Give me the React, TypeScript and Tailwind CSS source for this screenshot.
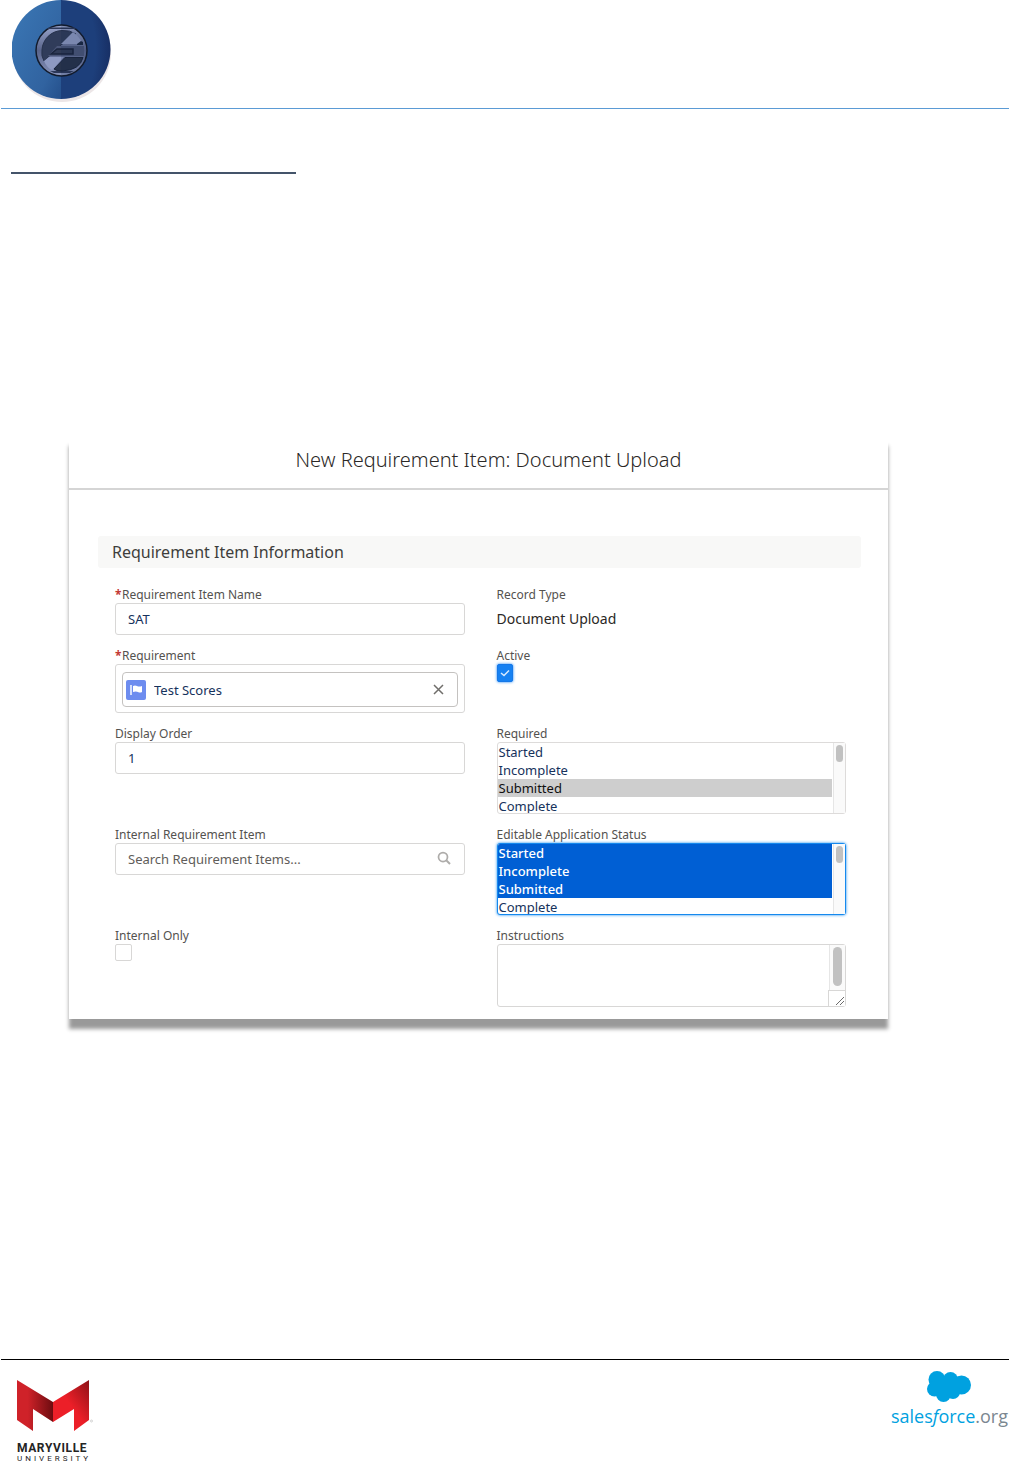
import React, { ReactNode, useState } from "react";
import clsx from "clsx";

const statuses = ["Started", "Incomplete", "Submitted", "Complete"];

interface FieldProps {
  id: string;
  label: string;
  required?: boolean;
  children: ReactNode;
}

function Field({ id, label, required, children }: FieldProps) {
  return (
    <div className="flex flex-col items-start">
      <label
        htmlFor={id}
        className="flex h-[18px] text-xs leading-5 text-[#54524f]"
      >
        {required && <span className="w-[7px] font-bold text-[#c23934]">*</span>}
        {label}
      </label>
      {children}
    </div>
  );
}

interface StatusListProps {
  id: string;
  defaultValue: string[];
  active?: boolean;
}

function StatusList({ id, defaultValue, active }: StatusListProps) {
  return (
    <div className="relative w-full">
      <select
        id={id}
        multiple
        size={4}
        defaultValue={defaultValue}
        className={clsx(
          "block h-[72px] w-full overflow-hidden rounded-[3px] border bg-white p-0 pr-[13px] text-[13px] text-[#16325c] outline-none",
          active
            ? "border-[#1589ee] shadow-[0_0_3px_#1589ee]"
            : "border-[#dddbda]"
        )}
      >
        {statuses.map((status) => (
          <option
            key={status}
            value={status}
            className={clsx(
              "h-[18px] min-h-0 px-px py-0 leading-4",
              active &&
                "checked:bg-[linear-gradient(#005fd4,#005fd4)] checked:[-webkit-text-fill-color:white] checked:font-medium"
            )}
          >
            {status}
          </option>
        ))}
      </select>
      <div className="pointer-events-none absolute inset-y-px right-px w-3 border-l border-[#e6e6e6] bg-[#fafafa]">
        <div className="mx-auto mt-[2px] h-[17px] w-[7px] rounded-full bg-[#c1c1c1]" />
      </div>
    </div>
  );
}

function AppLogo() {
  return (
    <svg width="100" height="103" viewBox="0 0 100 103" aria-hidden="true">
      <defs>
        <linearGradient id="discLeft" x1="0" y1="0" x2="1" y2="1">
          <stop offset="0" stopColor="#3b78b6" />
          <stop offset="0.75" stopColor="#3163a0" />
          <stop offset="1" stopColor="#25508c" />
        </linearGradient>
        <radialGradient id="discRight" cx="0.1" cy="0.5" r="1">
          <stop offset="0.6" stopColor="#1d3f7b" />
          <stop offset="1" stopColor="#162a5e" />
        </radialGradient>
        <linearGradient id="coin" x1="0" y1="0" x2="0" y2="1">
          <stop offset="0" stopColor="#9aa5cc" />
          <stop offset="0.5" stopColor="#59648a" />
          <stop offset="1" stopColor="#8793ba" />
        </linearGradient>
      </defs>
      <circle cx="50" cy="53" r="49" fill="#ece6e7" />
      <path d="M49 0A49.5 49.5 0 0 0 49 99Z" fill="url(#discLeft)" />
      <path d="M49 0A49.5 49.5 0 0 1 49 99Z" fill="url(#discRight)" />
      <circle cx="49.500" cy="50.500" r="25.500" fill="url(#coin)" stroke="#121b2c" strokeWidth="1.500" />
      <path d="M37 27.500H62L64 29H35Z" fill="#2c3859" />
      <path d="M38 71H62L58 73H42Z" fill="#2c3859" />
      {/* ring of the letter */}
      <path d="M64 34Q58 30 50 30.500A20.500 20.500 0 0 0 30 50Q29 56 32 61L49 45Z" fill="#303c5a" stroke="#27324c" />
      <path d="M49 44L61 32Q67 36 71 44Z" fill="#8d99c1" />
      <path d="M65 44L69 41L71 42V45H65Z" fill="#1b2842" />
      <path d="M45 46H72V56H36Z" fill="#4b5678" />
      {/* middle bar */}
      <path d="M39 54L45 49H61V54Z" fill="#303b56" stroke="#1a253d" strokeWidth="1.500" />
      <path d="M32 61L37 57H52L40 70Q35 68 32 61Z" fill="#8d99c1" />
      <path d="M53 57.500H71Q68 70 50 71Q44 71 42 69Z" fill="#27334b" stroke="#1a253d" />
      <path d="M49 25A25.500 25.500 0 0 1 49 76Z" fill="#10204a" opacity="0.150" />
    </svg>
  );
}

function MaryvilleLogo() {
  return (
    <div className="flex w-20 flex-col items-start text-[#242424]">
      <svg width="77" height="52" viewBox="0 0 77 52" aria-hidden="true">
        <defs>
          <linearGradient id="foldLeft" x1="0" y1="0" x2="1" y2="0">
            <stop offset="0.300" stopColor="#cf2229" />
            <stop offset="1" stopColor="#6d0c10" />
          </linearGradient>
          <linearGradient id="foldRight" x1="0" y1="1" x2="1" y2="0">
            <stop offset="0.500" stopColor="#ec1f28" />
            <stop offset="1" stopColor="#8e1217" />
          </linearGradient>
        </defs>
        <path d="M0 0L36 22V42L16 29V51L0 40Z" fill="url(#foldLeft)" />
        <path d="M72 0L36 22V42L57 29V51L72 40Z" fill="url(#foldRight)" />
        <circle cx="74.500" cy="41" r="1" fill="none" stroke="#aaa" strokeWidth="0.500" />
      </svg>
      <span className="mt-[10px] font-['Roboto'] text-xs leading-3 font-bold tracking-wider">
        MARYVILLE
      </span>
      <span className="font-['Roboto'] text-[8px] leading-[10px] tracking-[3px]">
        UNIVERSITY
      </span>
    </div>
  );
}

function SalesforceLogo() {
  return (
    <div className="flex flex-col">
      <svg width="44" height="32" viewBox="0 0 44 32" fill="#00a1e0" aria-hidden="true" className="ml-9">
        <circle cx="10" cy="8.500" r="8.500" />
        <circle cx="23.500" cy="8.500" r="7.500" />
        <circle cx="34.500" cy="14" r="9.500" />
        <circle cx="7.500" cy="18" r="7.500" />
        <circle cx="16.500" cy="23.500" r="7.500" />
        <circle cx="26" cy="21" r="7" />
        <path d="M10 8H32V22H10Z" />
      </svg>
      <span className="font-['Open_Sans'] text-lg leading-[26px] font-medium text-[#00a1e0]">
        sales<i>f</i>orce<span className="font-normal text-[#7b8790]">.org</span>
      </span>
    </div>
  );
}

export default function App() {
  const [showRequirement, setShowRequirement] = useState(true);

  return (
    <div className="flex min-h-screen flex-col bg-white font-['Noto_Sans',sans-serif]">
      <header className="ml-px h-[109px] border-b border-[#5b9bd5] pl-[11px]">
        <AppLogo />
      </header>

      <main className="flex-1 pr-[121px] pl-[69px]">
        <div className="-ml-[58px] mt-[63px] h-[2px] w-[285px] bg-[#44546a]" />

        {/* Requirement item form */}
        <form className="mt-[262px] bg-white pb-3 shadow-[0_10px_4px_rgba(0,0,0,0.4)]">
          <h1 className="border-b-2 border-[#d5d5d5] pt-2 pb-3 pl-5 text-center text-xl leading-8 font-light text-[#2b2826]">
            New Requirement Item: Document Upload
          </h1>
          <h2 className="mt-[46px] mr-[27px] ml-[29px] rounded-[3px] bg-[#f8f8f7] px-[14px] text-base leading-8 text-[#3e3e3c]">
            Requirement Item Information
          </h2>

          <div className="mt-[17px] mr-[42px] ml-[46px] grid grid-cols-2 gap-x-8 gap-y-[11px] text-[13px]">
            <Field id="name" label="Requirement Item Name" required>
              <input
                id="name"
                defaultValue="SAT"
                className="h-8 w-full rounded-[3px] border border-[#d8d7d6] px-3 text-[#16325c]"
              />
            </Field>
            <Field id="record-type" label="Record Type">
              <output id="record-type" className="text-sm leading-8 text-[#2b2826]">
                Document Upload
              </output>
            </Field>

            <Field id="requirement" label="Requirement" required>
              <div className="h-[49px] w-full rounded-[3px] border border-[#d8d7d6] px-[6px] pt-[7px] pb-[5px]">
                {showRequirement && (
                  <div className="flex h-full items-center rounded-[4px] border border-[#c4c2c0] pr-3 pl-[3px]">
                    <svg width="20" height="20" viewBox="0 0 20 20" aria-hidden="true">
                      <rect width="20" height="20" rx="2" fill="#6d8cef" />
                      <path d="M5 5V15" stroke="#d6dffb" strokeWidth="2" />
                      <path d="M7 6Q9 5 11 6T16 6V12Q14 13 12 12T7 12Z" fill="#fff" />
                    </svg>
                    <input
                      id="requirement"
                      defaultValue="Test Scores"
                      className="min-w-0 flex-1 pt-[2px] pl-2 text-[#16325c]"
                    />
                    <button
                      type="button"
                      aria-label="Remove requirement"
                      onClick={() => setShowRequirement(false)}
                    >
                      <svg width="12" height="12" viewBox="0 0 12 12" aria-hidden="true">
                        <path d="M1 1L10 10M10 1L1 10" stroke="#706e6b" strokeWidth="1.500" />
                      </svg>
                    </button>
                  </div>
                )}
              </div>
            </Field>
            <Field id="active" label="Active">
              <span className="relative block h-[18px] w-4">
                <input
                  id="active"
                  type="checkbox"
                  defaultChecked
                  className="peer block h-[18px] w-4 appearance-none rounded-[2px] border border-[#d8d7d6] checked:border-[#1578e8] checked:bg-[#1681f2] checked:shadow-[0_0_3px_#1681f2]"
                />
                <svg
                  width="10"
                  height="8"
                  viewBox="0 0 10 8"
                  fill="none"
                  aria-hidden="true"
                  className="pointer-events-none absolute top-[5px] left-[3px] hidden peer-checked:block"
                >
                  <path d="M1 4L4 6.500L9 1.500" stroke="#d8eaff" strokeWidth="1.500" />
                </svg>
              </span>
            </Field>

            <Field id="display-order" label="Display Order">
              <input
                id="display-order"
                defaultValue="1"
                className="h-8 w-full rounded-[3px] border border-[#d8d7d6] px-3 text-[#16325c]"
              />
            </Field>
            <Field id="required" label="Required">
              <StatusList id="required" defaultValue={["Submitted"]} />
            </Field>

            <Field id="internal-item" label="Internal Requirement Item">
              <div className="relative w-full">
                <input
                  id="internal-item"
                  placeholder="Search Requirement Items..."
                  className="block h-8 w-full rounded-[3px] border border-[#d8d7d6] px-3 placeholder:text-[#5f5d5a]"
                />
                <svg
                  width="14"
                  height="14"
                  viewBox="0 0 14 14"
                  fill="none"
                  stroke="#aeacaa"
                  aria-hidden="true"
                  className="absolute top-2 right-[14px]"
                >
                  <circle cx="6" cy="6" r="4.500" strokeWidth="1.750" />
                  <path d="M9 9L13 13" strokeWidth="2" />
                </svg>
              </div>
            </Field>
            <Field id="editable-status" label="Editable Application Status">
              <StatusList
                id="editable-status"
                defaultValue={["Started", "Incomplete", "Submitted"]}
                active
              />
            </Field>

            <Field id="internal-only" label="Internal Only">
              <input
                id="internal-only"
                type="checkbox"
                className="size-[17px] appearance-none rounded-[2px] border border-[#d8d7d6]"
              />
            </Field>
            <Field id="instructions" label="Instructions">
              <div className="relative w-full">
                <textarea
                  id="instructions"
                  className="block h-[63px] w-full resize-none rounded-[3px] border border-[#d8d7d6] pr-5"
                />
                <div className="pointer-events-none absolute inset-y-px right-px flex w-[17px] flex-col items-end">
                  <div className="w-4 flex-1 border-l border-[#e6e6e6] bg-[#fafafa] pt-[2px] pr-[3px] pb-1 pl-[3px]">
                    <div className="h-full w-[9px] rounded-full bg-[#c1c1c1]" />
                  </div>
                  <div className="h-4 w-[17px] border-t border-l border-[#d8d7d6] bg-white">
                    <svg width="16" height="15" viewBox="0 0 16 15" stroke="#6b6b6b" aria-hidden="true">
                      <path d="M7 14L15 6M11 14L15 10" />
                    </svg>
                  </div>
                </div>
              </div>
            </Field>
          </div>
        </form>
      </main>

      <footer className="ml-px flex h-[109px] items-start justify-between border-t border-black pr-px pl-4">
        <div className="pt-5">
          <MaryvilleLogo />
        </div>
        <div className="pt-[11px]">
          <SalesforceLogo />
        </div>
      </footer>
    </div>
  );
}
